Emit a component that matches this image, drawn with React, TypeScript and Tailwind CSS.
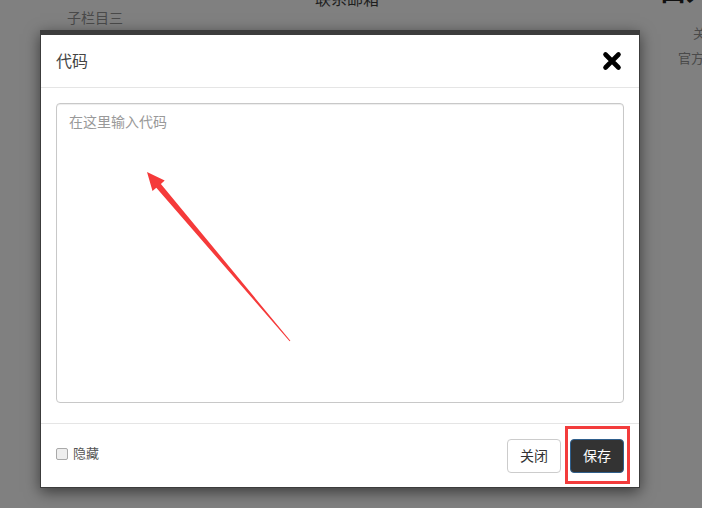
import React from "react";

const font = { fontFamily: '"Liberation Sans", "Noto Sans CJK SC", sans-serif' };

function CloseIcon() {
  return (
    <svg width="20" height="20" viewBox="0 0 20 20">
      <path d="M3.5 3.5 L16.5 16.5 M16.5 3.5 L3.5 16.5" stroke="#000" strokeWidth="4.6" strokeLinecap="round" />
    </svg>
  );
}

export default function App() {
  return (
    <div
      className="relative w-[702px] h-[508px] overflow-hidden bg-[#808080]"
      style={font}
    >
      {/* dimmed page behind */}
      <div className="flex h-full">
        <div className="ml-[67px] mt-[9px] text-[14px] leading-[18px] text-[#4a4a4a] shrink-0">子栏目三</div>
        <div className="ml-[192px] mt-[-9px] text-[16px] leading-[18px] text-[#1e1e1e] shrink-0">联系邮箱</div>
        <div className="ml-auto mr-[-40px] flex flex-col w-[82px] shrink-0">
          <div className="mt-[-22px] text-[26px] leading-[28px] font-bold text-[#111]">口入</div>
          <div className="ml-[33px] mt-[19px] text-[13px] leading-[18px] text-[#4a4a4a]">关于</div>
          <div className="ml-[18px] mt-[7px] text-[13px] leading-[18px] text-[#4a4a4a]">官方网站</div>
        </div>
      </div>

      {/* modal */}
      <div className="absolute left-[40px] top-[30px] w-[600px] h-[458px] bg-white border border-[#3c3c3c] border-t-[5px] shadow-[0_4px_14px_rgba(0,0,0,0.55)] flex flex-col">
        <div className="h-[53px] border-b border-[#e5e5e5] flex items-center justify-between pl-[15px] pr-[17px]">
          <span className="text-[16px] text-[#444] mt-[1px]">代码</span>
          <CloseIcon />
        </div>
        <div className="px-[15px] pt-[15px] pb-[20px]">
          <div className="h-[300px] border border-[#c8c8c8] rounded-[4px] shadow-[inset_0_1px_1px_rgba(0,0,0,0.075)] px-[12px] pt-[8px] text-[14px] leading-[20px] text-[#999]">
            在这里输入代码
          </div>
        </div>
        <div className="flex-1 border-t border-[#e5e5e5] flex items-start justify-between px-[15px] pt-[15px]">
          <label className="flex items-center mt-[5px] gap-[5px] text-[13px] text-[#555]">
            <span className="w-[12px] h-[12px] rounded-[2px] border border-[#a9a9a9] bg-[#eeeeee]" />
            隐藏
          </label>
          <div className="flex gap-[9px]">
            <div className="w-[54px] h-[34px] flex items-center justify-center rounded-[4px] border border-[#ccc] bg-white text-[14px] text-[#333]">
              关闭
            </div>
            <div className="relative">
              <div className="w-[54px] h-[34px] flex items-center justify-center rounded-[4px] border border-[#2f5f8c] bg-[#333] text-[14px] text-white">
                保存
              </div>
              <div className="absolute left-[-5px] top-[-13px] w-[65px] h-[58px] border-[3px] border-[#f33c3c]" />
            </div>
          </div>
        </div>
      </div>

      {/* red arrow annotation */}
      <svg className="absolute left-0 top-0" width="702" height="508" viewBox="0 0 702 508">
        <polygon
          points="147,172 164.7,180.6 160.9,183.9 290.4,340.7 289.6,341.3 156.3,187.7 152.5,191"
          fill="#f53a3a"
        />
      </svg>
    </div>
  );
}
